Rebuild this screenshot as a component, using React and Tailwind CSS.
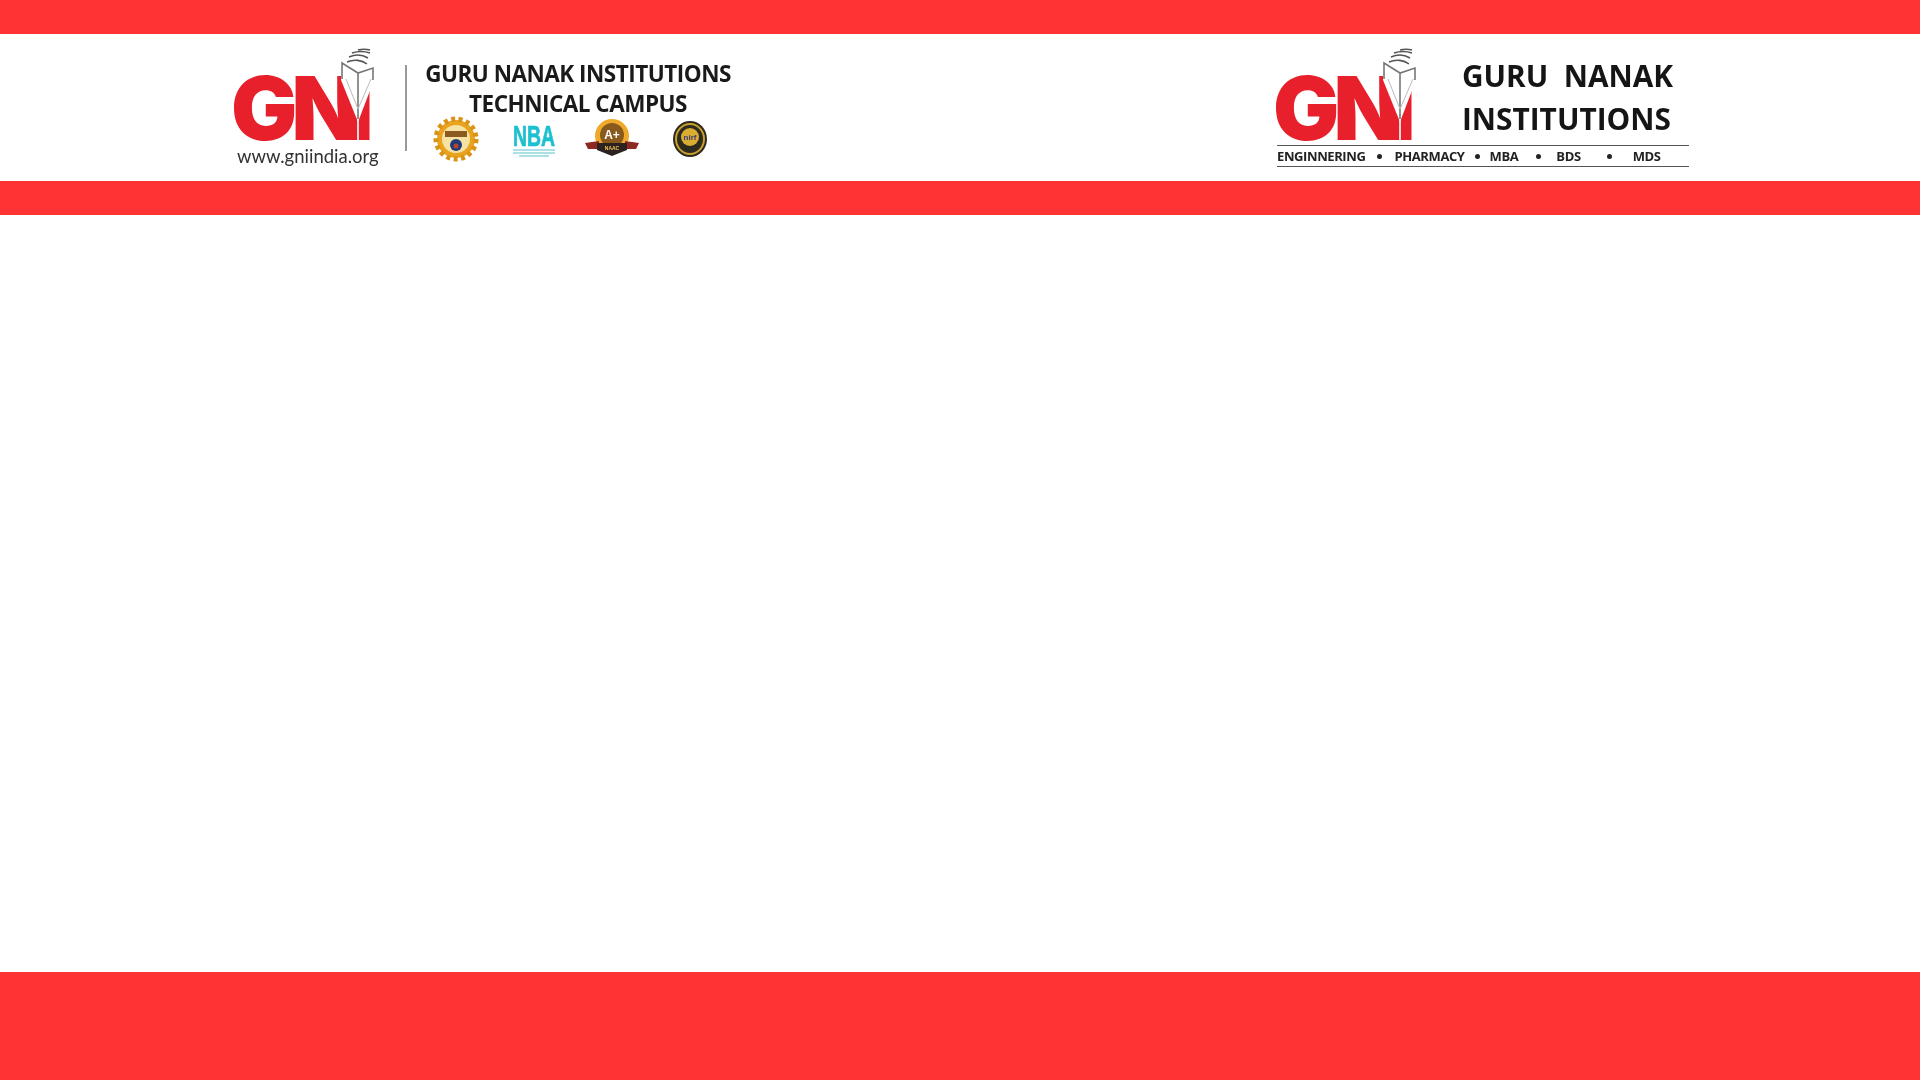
import React from "react";

const sans = "font-['Open_Sans','Liberation_Sans',sans-serif]";

const GniMark = () => (
  <div className="relative h-[94px] w-[143px] shrink-0">
    <div className="absolute left-[-1px] top-[27px] flex whitespace-nowrap font-['Inter',sans-serif] text-[88px] font-black leading-[66px] text-[#e8202c]">
      <span className="block h-[66px] tracking-[-6px]">G</span>
      <span className="block h-[66px] tracking-[-11px]">N</span>
      <span className="block h-[66px]">I</span>
    </div>
    <svg className="absolute left-[2px] top-0" width="143" height="94" viewBox="0 0 143 94">
      {/* white notch between the N and the I */}
      <rect x="123.2" y="60" width="1.6" height="34" fill="#fff" />
      <polygon points="107,14 124,25 140,19 140,32 124,74 107,32" fill="#fff" />
      <path d="M108 31V15l16 10 15-5v12M124 25v46" fill="none" stroke="#777" strokeWidth="1.6" />
      <path d="M112 31l12 30M137 31l-13 30" fill="none" stroke="#bbb" strokeWidth="1" />
      {/* page leaves */}
      <path
        d="M113 14c7-3 15-2 20 2M115 9c7-3 14-2 19 1M118 5c6-2 12-2 18 0M124 2c4-1 8-1 12 0"
        fill="none"
        stroke="#555"
        strokeWidth="1.6"
      />
    </svg>
  </div>
);

const AicteBadge = () => (
  <svg width="46" height="46" viewBox="0 0 46 46">
    <circle cx="23" cy="23" r="19" fill="#e9a31f" />
    <circle cx="23" cy="23" r="20" fill="none" stroke="#d99416" strokeWidth="5" strokeDasharray="4 3.4" />
    <circle cx="23" cy="23" r="14" fill="#f6e3a4" />
    <rect x="12" y="15" width="22" height="6" fill="#8a5a20" />
    <circle cx="23" cy="29" r="6" fill="#233a78" />
    <circle cx="23" cy="30" r="2.5" fill="#b5452c" />
  </svg>
);

const NbaBadge = () => (
  <svg width="46" height="42" viewBox="0 0 46 42">
    <text
      x="2"
      y="28"
      textLength="42"
      lengthAdjust="spacingAndGlyphs"
      fontFamily="Liberation Sans"
      fontWeight="700"
      fontSize="30"
      fill="#1cc0d0"
      stroke="#1cc0d0"
      strokeWidth="0.7"
    >
      NBA
    </text>
    <path d="M2 32h42M2 35h42M8 38h30" stroke="#8fd8e0" strokeWidth="1.6" />
  </svg>
);

const NaacBadge = () => (
  <svg width="54" height="40" viewBox="0 0 54 40">
    <circle cx="27" cy="17" r="17" fill="#eeaa2b" />
    <circle cx="27" cy="16" r="12" fill="#8a5a1c" />
    <text x="27" y="20" textAnchor="middle" fontFamily="Liberation Sans" fontWeight="700" fontSize="12" fill="#fff">
      A+
    </text>
    <path d="M0 24l14-2v8H3zM54 24l-14-2v8h11z" fill="#8c2a22" />
    <path d="M12 24h30v7l-15 6-15-6z" fill="#2c2320" />
    <text x="27" y="31" textAnchor="middle" fontFamily="Liberation Sans" fontWeight="700" fontSize="5" fill="#f3c35b">
      NAAC
    </text>
  </svg>
);

const NirfBadge = () => (
  <svg width="36" height="38" viewBox="0 0 36 38">
    <ellipse cx="18" cy="19" rx="17" ry="18" fill="#2d2a1e" />
    <ellipse cx="18" cy="19" rx="14" ry="15" fill="none" stroke="#c9a02f" strokeWidth="2" />
    <circle cx="18" cy="17" r="9" fill="#d9ad32" />
    <text x="18" y="20" textAnchor="middle" fontFamily="Liberation Sans" fontWeight="700" fontSize="8" fill="#3b3a78">
      nirf
    </text>
  </svg>
);

const App = () => {
  return (
    <div className={`flex min-h-screen flex-col bg-white ${sans}`}>
      <div className="h-[34px] bg-[#ff3333]" />

      <header className="flex h-[147px] items-start justify-between pl-[232px] pr-[231px] pt-[14px]">
        {/* left logo */}
        <div className="flex blur-[0.4px]">
          <div className="flex w-[143px] flex-col">
            <GniMark />
            <span className="ml-[5px] mt-[5px] whitespace-nowrap font-['Lato',sans-serif] text-[18.5px] leading-[18px] text-[#333]">
              www.gniindia.org
            </span>
          </div>
          <div className="ml-[30px] mt-[17px] h-[86px] w-[2px] bg-[#999]" />
          <div className="ml-[19px] mt-[11px] flex w-[304px] flex-col items-center">
            <span className="whitespace-nowrap text-[22.5px] font-bold leading-[30px] tracking-[-0.5px] text-[#1a1a1a]">
              GURU NANAK INSTITUTIONS
            </span>
            <span className="whitespace-nowrap text-[22.5px] font-bold leading-[30px] tracking-[-0.5px] text-[#1a1a1a]">
              TECHNICAL CAMPUS
            </span>
            <div className="mt-[-3px] flex h-[46px] items-center self-start pl-[7px]">
              <AicteBadge />
              <div className="ml-[32px]">
                <NbaBadge />
              </div>
              <div className="ml-[28px]">
                <NaacBadge />
              </div>
              <div className="ml-[33px]">
                <NirfBadge />
              </div>
            </div>
          </div>
        </div>

        {/* right logo */}
        <div className="flex w-[412px] flex-col blur-[0.4px]">
          <div className="flex h-[82px]">
            <div className="ml-[-3px]">
              <GniMark />
            </div>
            <div className="ml-[45px] mt-[6px] flex flex-col text-[29.8px] font-bold leading-[43px] text-[#151515]">
              <span className="whitespace-pre">GURU  NANAK</span>
              <span>INSTITUTIONS</span>
            </div>
          </div>
          <div className="mt-[15px] h-px bg-[#555]" />
          <div className="flex h-[20px] items-center whitespace-nowrap pt-px text-[13px] font-bold tracking-[-0.4px] text-[#222]">
            <span>ENGINNERING</span>
            <span className="ml-[12px] h-[5px] w-[5px] rounded-full bg-[#222]" />
            <span className="ml-[12px]">PHARMACY</span>
            <span className="ml-[10px] h-[5px] w-[5px] rounded-full bg-[#222]" />
            <span className="ml-[10px]">MBA</span>
            <span className="ml-[18px] h-[5px] w-[5px] rounded-full bg-[#222]" />
            <span className="ml-[15px]">BDS</span>
            <span className="ml-[26px] h-[5px] w-[5px] rounded-full bg-[#222]" />
            <span className="ml-[21px]">MDS</span>
          </div>
          <div className="h-px bg-[#555]" />
        </div>
      </header>

      <div className="h-[34px] bg-[#ff3333]" />
      <main className="flex-1" />
      <footer className="h-[108px] bg-[#ff3333]" />
    </div>
  );
};

export default App;
